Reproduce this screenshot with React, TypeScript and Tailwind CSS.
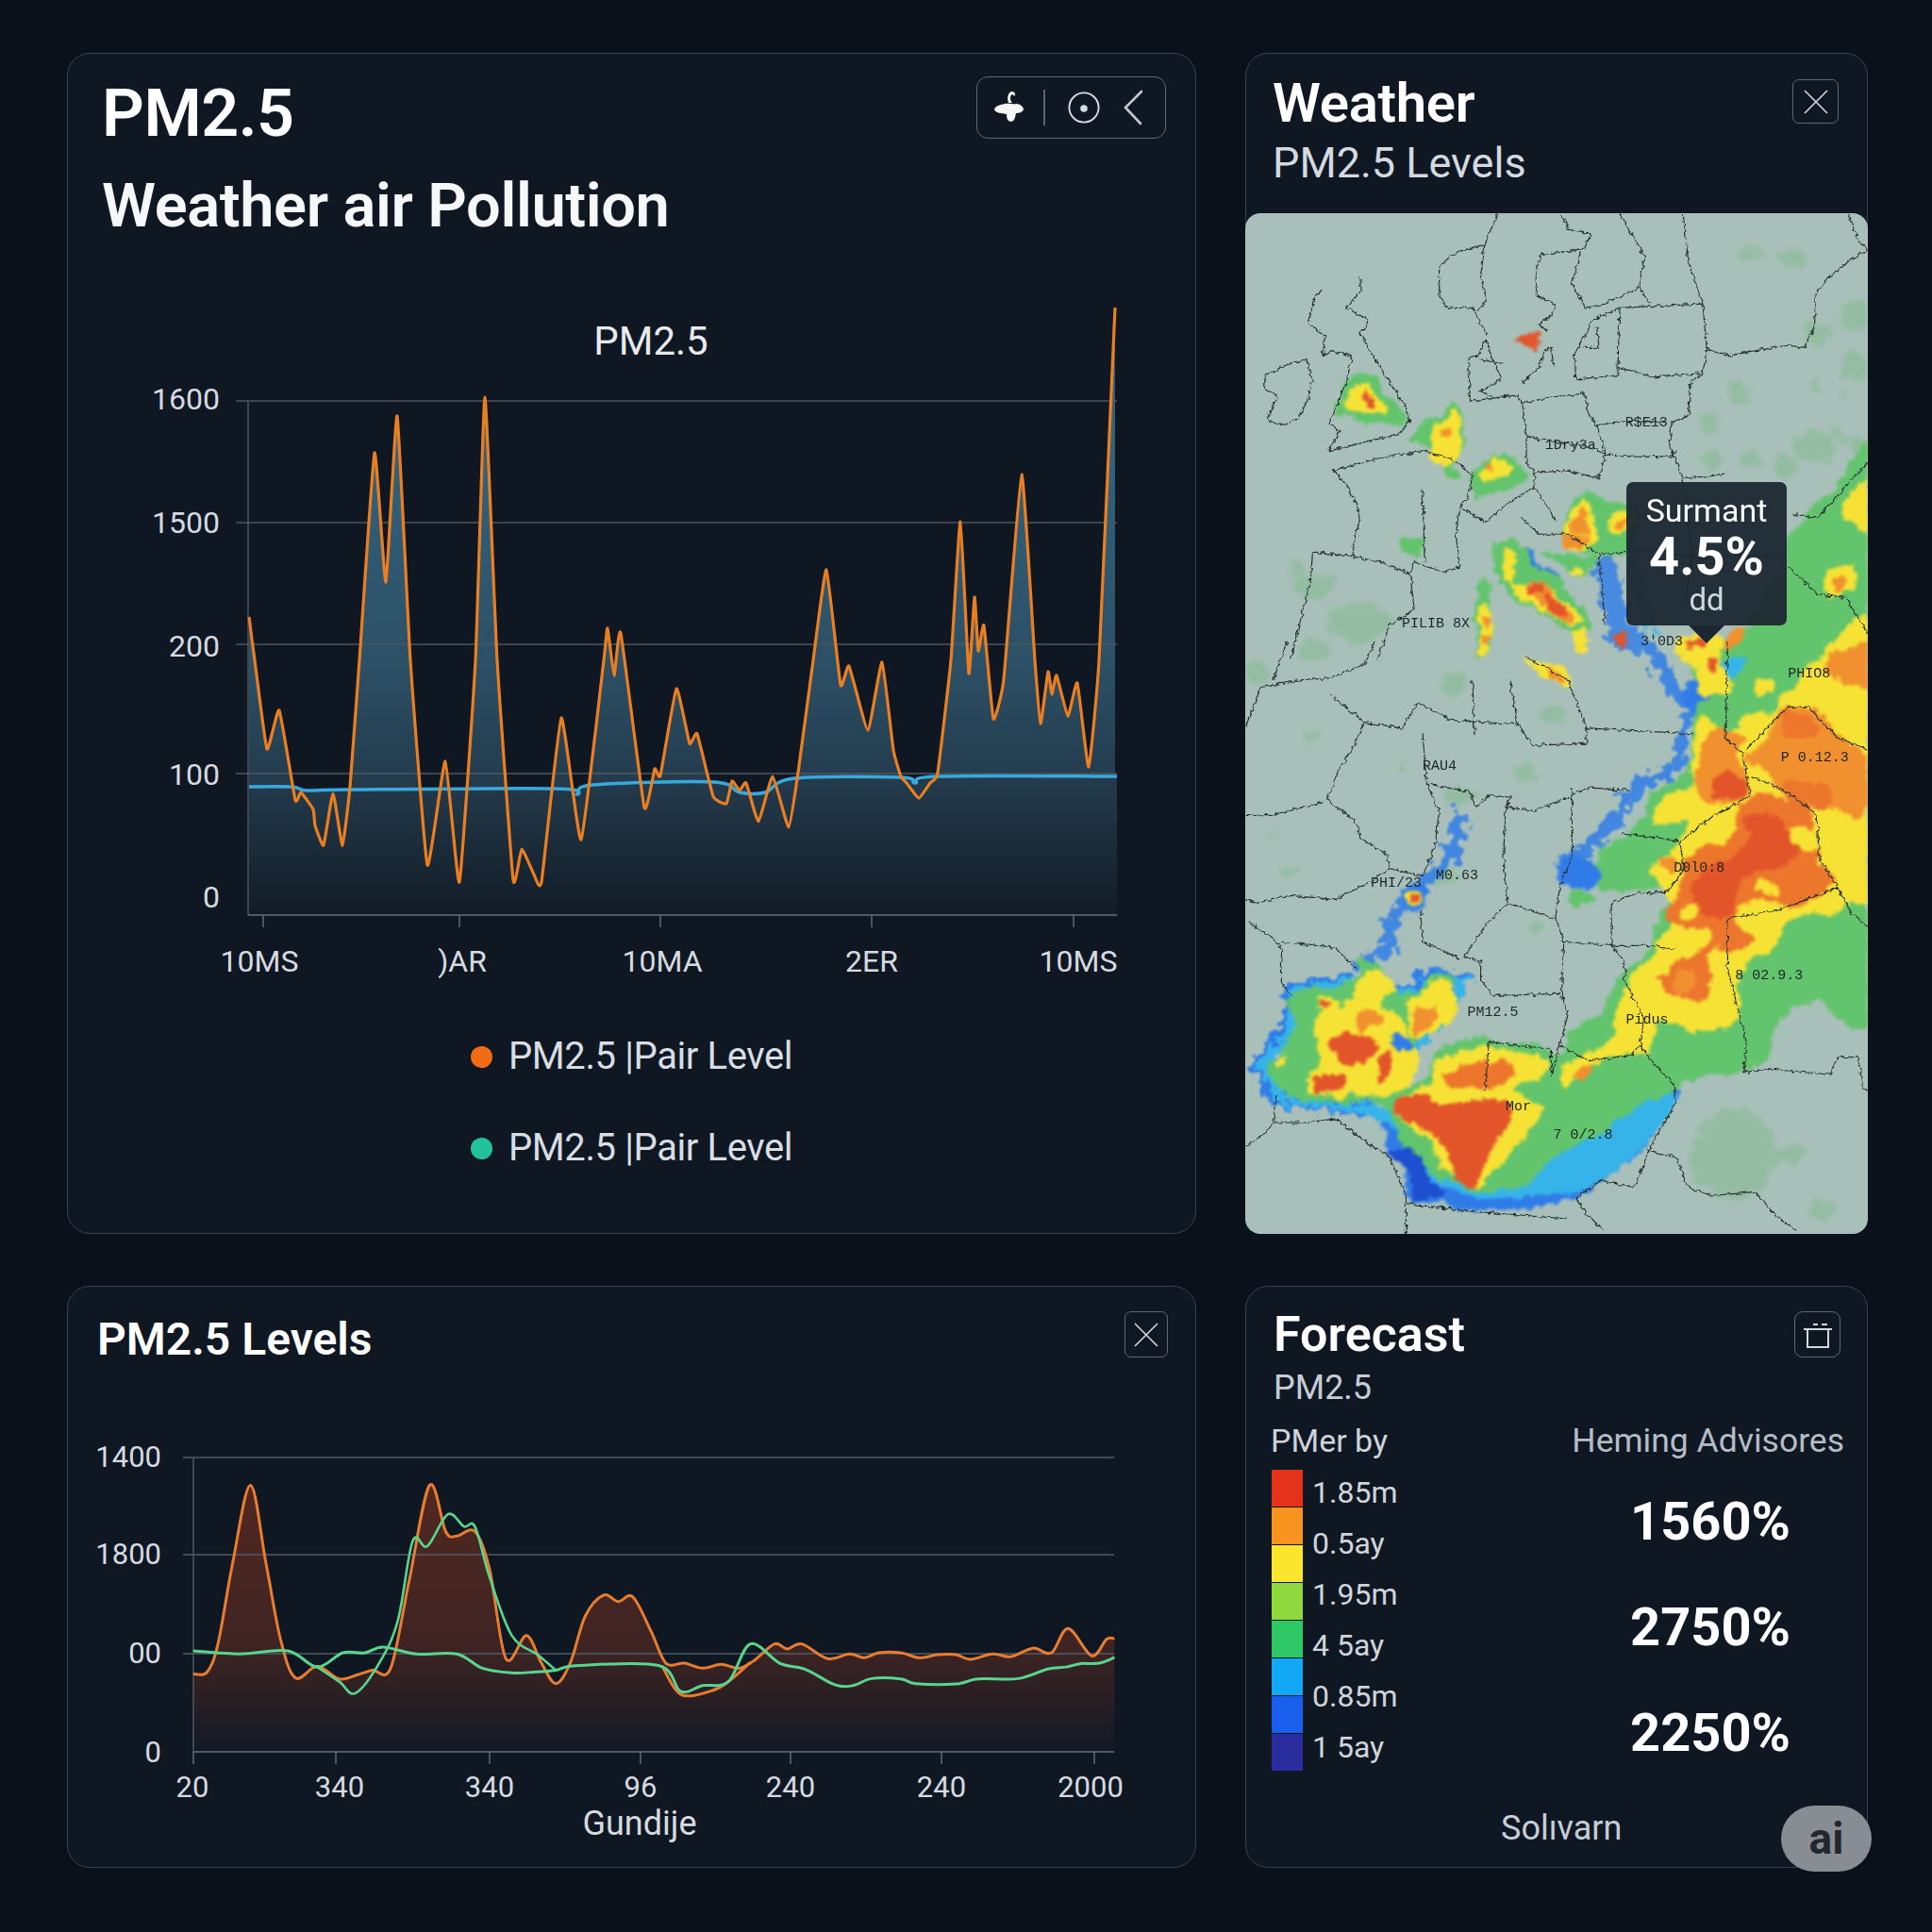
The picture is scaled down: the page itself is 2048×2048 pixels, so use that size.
import React from "react";

type Pt = number[];

const parse = (s: string): Pt[] => s.trim().split(/\s+/).map((p) => p.split(",").map(Number));

// catmull-rom through the points, t keeps the peaks sharp on the big chart
function smooth(p: Pt[], t = 0.5) {
  let d = `M${p[0][0]},${p[0][1]}`;
  for (let i = 0; i < p.length - 1; i++) {
    const a = p[i - 1] || p[i];
    const b = p[i];
    const c = p[i + 1];
    const e = p[i + 2] || c;
    d += ` C${b[0] + ((c[0] - a[0]) * t) / 3},${b[1] + ((c[1] - a[1]) * t) / 3} ${c[0] - ((e[0] - b[0]) * t) / 3},${c[1] - ((e[1] - b[1]) * t) / 3} ${c[0]},${c[1]}`;
  }
  return d;
}

function blob(s: string) {
  const p = parse(s);
  const n = p.length;
  let d = `M${p[0][0]},${p[0][1]}`;
  for (let i = 0; i < n; i++) {
    const a = p[(i - 1 + n) % n];
    const b = p[i];
    const c = p[(i + 1) % n];
    const e = p[(i + 2) % n];
    d += ` C${b[0] + (c[0] - a[0]) / 6},${b[1] + (c[1] - a[1]) / 6} ${c[0] - (e[0] - b[0]) / 6},${c[1] - (e[1] - b[1]) / 6} ${c[0]},${c[1]}`;
  }
  return d + "Z";
}

const mainOrange = parse(
  "264,654 270,700 283,794 296,753 313,848 319,840 332,858 334,875 343,896 353,841 363,896 371,834 381,700 397,480 409,617 421,441 435,700 453,917 472,807 487,935 504,700 514,421 527,700 544,933 553,900 566,927 574,935 595,761 616,890 640,700 644,666 651,716 658,671 683,856 694,815 700,822 717,730 731,788 739,778 756,844 770,852 776,828 784,838 791,830 804,871 819,823 836,877 846,819 862,700 876,604 891,726 900,706 920,774 935,702 947,795 955,823 961,830 974,846 986,830 994,819 1008,700 1018,553 1027,714 1033,633 1037,690 1043,663 1053,762 1064,720 1083,503 1097,700 1103,767 1111,712 1115,736 1120,716 1132,759 1142,724 1154,813 1165,700 1182,326"
);
const mainBlue = parse(
  "264,834 309,834 325,838 367,837 589,836 612,842 628,832 756,829 784,840 811,840 842,825 955,824 970,830 994,823 1184,823"
);

const z6 = (s: string) => parse(s).map(([x, y]) => [60 + x / 1.285, 1350 + y / 2.45]);
const lowOrange = z6(
  "186,1040 205,1035 220,960 240,750 264,550 285,750 305,950 325,1050 355,1020 385,1053 410,1042 430,1030 455,1025 480,800 508,550 530,670 545,682 570,670 590,770 612,1000 640,940 660,1010 680,1065 700,1010 720,890 745,835 765,852 785,840 810,930 830,1012 855,1012 880,1025 905,1015 930,1025 950,1005 978,962 995,975 1015,962 1050,1000 1080,988 1100,998 1120,985 1150,985 1175,998 1200,990 1225,990 1245,1002 1275,988 1300,995 1330,973 1355,985 1378,922 1410,993 1430,950 1441,948"
);
const lowOrangeDip = z6("825,1020 850,1093 890,1085 915,1060 945,1010");
const lowGreen = z6(
  "186,980 250,988 315,980 355,1022 390,985 420,985 445,970 490,988 545,988 580,1025 620,1037 650,1035 680,1030 710,1018 820,1018 850,1085 880,1070 915,1060 945,962 985,1012 1020,1028 1060,1068 1085,1070 1110,1052 1150,1053 1170,1065 1225,1066 1255,1053 1310,1052 1350,1027 1375,1022 1395,1013 1420,1012 1441,997"
);
const lowGreenPeak = z6(
  "355,1022 385,1060 407,1090 440,1010 465,900 485,695 505,708 533,625 555,657 570,658 590,790 620,940 655,990 680,1030"
);

const axisText = "#d5dbe0";

function MainChart() {
  const area = (p: Pt[]) => `${smooth(p, 0.2)} L${p[p.length - 1][0]},970 L${p[0][0]},970Z`;
  return (
    <svg width="1195" height="640" viewBox="72 400 1195 640" className="block shrink-0 overflow-visible">
      <defs>
        <linearGradient id="mainFill" gradientUnits="userSpaceOnUse" x1="0" y1="480" x2="0" y2="972">
          <stop offset="0" stopColor="#33617c" />
          <stop offset="0.45" stopColor="#2c5066" />
          <stop offset="0.7" stopColor="#243c4e" />
          <stop offset="0.88" stopColor="#192835" />
          <stop offset="1" stopColor="#121b27" />
        </linearGradient>
      </defs>
      <path d={area(mainOrange)} fill="url(#mainFill)" />
      <path d={area(mainBlue)} fill="url(#mainFill)" />
      {[425, 554, 683, 820].map((y) => (
        <line key={y} x1="250" x2="1184" y1={y} y2={y} stroke="#4d5761" strokeWidth="1.4" />
      ))}
      <line x1="263" x2="263" y1="425" y2="970" stroke="#4f5a65" strokeWidth="1.4" />
      <line x1="263" x2="1184" y1="970" y2="970" stroke="#66707b" strokeWidth="1.6" />
      {[279, 487, 700, 924, 1138].map((x) => (
        <line key={x} x1={x} x2={x} y1="970" y2="983" stroke="#66707b" strokeWidth="1.4" />
      ))}
      <path d={smooth(mainBlue)} fill="none" stroke="#38a9dc" strokeWidth="3.5" strokeLinejoin="round" />
      <path d={smooth(mainOrange, 0.2)} fill="none" stroke="#ea7f22" strokeWidth="3.2" strokeLinejoin="round" />
      <g fontFamily="Roboto, sans-serif" fontSize="32" fill={axisText}>
        {[
          ["1600", 434],
          ["1500", 565],
          ["200", 696],
          ["100", 832],
          ["0", 962],
        ].map(([t, y]) => (
          <text key={t} x="233" y={y} textAnchor="end">
            {t}
          </text>
        ))}
        {[
          ["10MS", 275],
          [")AR", 490],
          ["10MA", 702],
          ["2ER", 924],
          ["10MS", 1143],
        ].map(([t, x], i) => (
          <text key={i} x={x} y="1030" textAnchor="middle">
            {t}
          </text>
        ))}
      </g>
    </svg>
  );
}

function LowChart() {
  const area = `${smooth(lowOrange)} L1181,1857 L205,1857Z`;
  return (
    <svg width="1195" height="440" viewBox="72 1520 1195 440" className="block shrink-0">
      <defs>
        <linearGradient id="lowFill" gradientUnits="userSpaceOnUse" x1="0" y1="1570" x2="0" y2="1857">
          <stop offset="0" stopColor="#532821" />
          <stop offset="0.6" stopColor="#3f2423" />
          <stop offset="0.8" stopColor="#2a1f24" />
          <stop offset="1" stopColor="#111925" />
        </linearGradient>
      </defs>
      <path d={area} fill="url(#lowFill)" />
      {[1545, 1648, 1753].map((y) => (
        <line key={y} x1="194" x2="1181" y1={y} y2={y} stroke="#525c66" strokeWidth="1.4" />
      ))}
      <line x1="205" x2="205" y1="1545" y2="1857" stroke="#525c66" strokeWidth="1.4" />
      <line x1="205" x2="1181" y1="1857" y2="1857" stroke="#66707b" strokeWidth="1.6" />
      {[205, 356, 519, 679, 838, 998, 1160].map((x) => (
        <line key={x} x1={x} x2={x} y1="1857" y2="1870" stroke="#66707b" strokeWidth="1.4" />
      ))}
      <path d={smooth(lowOrangeDip)} fill="none" stroke="#e87c30" strokeWidth="3" />
      <path d={smooth(lowOrange)} fill="none" stroke="#e87c30" strokeWidth="3" strokeLinejoin="round" />
      <path d={smooth(lowGreen)} fill="none" stroke="#58d68d" strokeWidth="3" strokeLinejoin="round" />
      <path d={smooth(lowGreenPeak)} fill="none" stroke="#58d68d" strokeWidth="2.6" strokeLinejoin="round" />
      <g fontFamily="Roboto, sans-serif" fontSize="31" fill={axisText}>
        {[
          ["1400", 1555],
          ["1800", 1658],
          ["00", 1763],
          ["0", 1868],
        ].map(([t, y]) => (
          <text key={t} x="171" y={y} textAnchor="end">
            {t}
          </text>
        ))}
        {[
          ["20", 204],
          ["340", 360],
          ["340", 519],
          ["96", 679],
          ["240", 838],
          ["240", 998],
          ["2000", 1156],
        ].map(([t, x], i) => (
          <text key={i} x={x} y="1905" textAnchor="middle">
            {t}
          </text>
        ))}
        <text x="678" y="1945" textAnchor="middle" fontSize="36">
          Gundije
        </text>
      </g>
    </svg>
  );
}

const GREEN = "#62c46c";
const YEL = "#f6e234";
const ORG = "#f1902e";
const DEEP = "#ec772c";
const RED = "#e2552a";
const BLUE = "#2f7ce8";
const CYAN = "#36b4ea";
const PALE = "#93bca2";

const heat5: [string, string][] = [
  [BLUE, "340,1250 380,1310 420,1440 540,1478 720,1480 830,1445 900,1385 1000,1300 1060,1200 1040,1170 800,1200 600,1250 400,1200"],
  [CYAN, "330,1215 420,1310 520,1430 690,1445 830,1430 1000,1295 1055,1180 900,1200 760,1300"],
  ["#1d4fd0", "375,1320 430,1320 470,1390 500,1445 440,1450 410,1390"],
  [BLUE, "1090,100 1250,50 1330,90 1280,170 1180,210 1100,190"],
  [CYAN, "1180,60 1300,40 1320,100 1260,170 1190,190"],
  [GREEN, "1110,170 1100,260 1080,340 990,420 960,490 880,540 885,630 950,650 1040,640 1030,700 990,790 930,880 880,960 800,1030 780,1070 640,1040 500,1050 460,1120 400,1150 460,1000 540,880 480,870 420,910 380,910 350,840 300,840 280,880 140,910 130,1000 100,1090 70,1100 110,1170 200,1190 330,1200 390,1280 470,1370 560,1425 700,1410 790,1320 940,1230 1050,1170 1100,1140 1210,1130 1280,1080 1310,980 1400,940 1540,950 1540,-50 1300,-50 1200,100"],
  [YEL, "1120,200 1180,230 1230,190 1300,170 1400,40 1540,-20 1540,620 1460,690 1350,720 1300,780 1230,830 1210,960 1190,1000 1090,1010 1020,990 1000,1060 900,1080 860,1100 790,1160 780,1110 880,1040 910,980 950,880 1020,780 1060,700 1010,620 1000,580 1050,540 1090,470 1010,470 1030,410 1090,380 1100,300"],
  [GREEN, "1190,110 1260,90 1300,120 1240,180 1190,200"],
  [ORG, "1300,190 1380,170 1450,240 1510,290 1530,400 1500,470 1440,430 1350,410 1280,340 1230,310 1270,260"],
  [DEEP, "1320,190 1375,185 1400,230 1360,255 1325,240"],
  [DEEP, "1320,360 1400,370 1440,400 1400,425 1340,400"],
  [ORG, "1420,60 1480,10 1540,10 1540,120 1460,110"],
  [ORG, "1120,290 1150,230 1230,240 1210,280 1230,340 1220,390 1130,420 1100,380 1110,320"],
  [DEEP, "1220,400 1300,390 1390,440 1400,560 1440,630 1360,680 1240,680 1190,720 1250,770 1200,800 1150,800 1130,930 1090,930 1020,880 1050,830 1110,820 1150,760 1080,750 1040,700 1060,640 1090,570 1150,530 1200,500 1210,450"],
  [RED, "1240,460 1320,470 1360,540 1320,590 1230,610 1215,670 1160,720 1110,690 1110,620 1180,560 1230,530"],
  [RED, "1150,360 1200,340 1220,380 1160,400"],
  [YEL, "1350,490 1395,500 1390,540 1350,530"],
  [YEL, "1250,635 1300,630 1300,660 1250,665"],
  [YEL, "1075,690 1110,680 1110,720 1080,725"],
  [ORG, "1015,565 1050,560 1065,600 1035,605"],
  [ORG, "1040,870 1080,850 1100,880 1070,910"],
  [YEL, "290,880 340,850 370,890 350,950 420,1010 430,1100 390,1170 210,1180 170,1160 200,1060 200,980 260,950"],
  [GREEN, "115,1040 150,1020 130,1090 90,1150 105,1100"],
  [YEL, "95,1100 130,1070 115,1110"],
  [RED, "230,1040 300,1010 340,1040 330,1080 270,1100 230,1070"],
  [ORG, "300,960 340,960 350,1000 300,1000"],
  [YEL, "205,915 240,915 245,960 210,965"],
  [RED, "210,930 232,930 232,952 212,952"],
  [YEL, "425,920 520,880 530,940 470,1020 430,1020"],
  [ORG, "435,960 490,940 470,990 440,1020"],
  [RED, "190,1140 260,1130 262,1165 200,1175"],
  [RED, "350,1080 380,1065 360,1135 345,1130"],
  [BLUE, "375,1025 425,1030 425,1060 385,1060"],
  [YEL, "480,1090 560,1060 680,1070 750,1110 680,1170 740,1210 690,1300 630,1380 560,1410 480,1340 440,1270 370,1220 400,1180 470,1150"],
  [DEEP, "500,1120 560,1095 670,1100 650,1150 560,1160 520,1150"],
  [RED, "370,1220 410,1180 520,1195 650,1200 660,1260 620,1310 590,1390 540,1410 500,1320 450,1260"],
  [ORG, "800,1130 850,1100 860,1120 820,1150"],
  [GREEN, "800,660 830,640 870,660 840,690 805,690"],
  [YEL, "1120,50 1170,40 1190,110 1150,140 1115,110"],
  [RED, "1140,45 1165,45 1165,70 1145,70"],
  [YEL, "1260,110 1295,110 1295,140 1262,140"],
  [BLUE, "410,650 450,640 450,690 410,700"],
  [YEL, "420,665 442,660 440,688 420,690"],
  [RED, "425,672 437,672 436,686 425,686"],
  [YEL, "695,45 800,60 805,110 750,90"],
  [ORG, "760,60 790,70 790,100 765,90"],
  [BLUE, "775,575 820,565 880,600 870,630 810,635 780,620"],
];

const heat4: [string, string][] = [
  [GREEN, "280,850 340,850 370,900 410,960 350,975 250,960 250,910"],
  [YEL, "295,880 340,880 360,930 320,950 280,950 262,920"],
  [RED, "315,890 335,910 335,930 312,930"],
  [GREEN, "430,1020 480,950 535,925 545,1000 530,1060 550,1090 520,1095 480,1040"],
  [YEL, "480,970 530,945 535,1000 525,1060 470,1060 470,1020"],
  [ORG, "490,980 510,980 510,1000 490,1000"],
  [GREEN, "570,1100 610,1050 670,1060 700,1110 680,1140 600,1150 570,1170"],
  [YEL, "585,1090 620,1060 670,1085 650,1110 590,1110"],
  [ORG, "593,1068 612,1068 612,1085 595,1085"],
  [GREEN, "790,1200 840,1140 900,1170 950,1190 950,1290 860,1300 800,1280"],
  [YEL, "800,1200 850,1170 860,1270 800,1290"],
  [ORG, "815,1210 850,1200 845,1240 820,1240"],
  [ORG, "795,1250 835,1250 835,1285 800,1285"],
  [YEL, "905,1205 945,1205 945,1245 905,1245"],
  [ORG, "918,1215 935,1215 935,1235 918,1235"],
  [GREEN, "750,1290 830,1310 870,1300 850,1350 810,1350"],
  [YEL, "805,1335 835,1335 835,1355 805,1355"],
  [BLUE, "690,1290 710,1290 770,1350 740,1360"],
  [GREEN, "615,1290 660,1265 700,1300 780,1370 840,1450 860,1490 830,1510 780,1480 700,1430 650,1370"],
  [YEL, "640,1300 665,1300 690,1370 770,1400 830,1470 790,1470 700,1420"],
  [ORG, "700,1385 740,1370 770,1410 810,1460 770,1460 730,1430"],
  [RED, "705,1385 740,1378 745,1400 712,1405"],
  [RED, "745,1415 790,1430 790,1455 760,1450"],
  [YEL, "815,1500 840,1500 845,1550 820,1550"],
  [GREEN, "585,1375 610,1370 612,1450 615,1530 585,1540 580,1450"],
  [YEL, "590,1430 610,1430 612,1530 588,1535"],
  [ORG, "595,1455 608,1455 608,1475 595,1475"],
  [ORG, "595,1500 610,1500 610,1525 595,1525"],
  [GREEN, "400,1265 445,1265 445,1295 400,1295"],
  [GREEN, "1530,1070 1440,1130 1370,1200 1330,1300 1230,1480 1100,1600 1540,1700"],
  [YEL, "1540,1110 1480,1150 1470,1210 1520,1240 1540,1230"],
  [YEL, "1420,1330 1490,1330 1490,1400 1420,1410"],
  [ORG, "1440,1350 1470,1350 1470,1380 1440,1385"],
  [YEL, "1395,1500 1480,1490 1500,1560 1400,1568"],
  [ORG, "1420,1500 1460,1500 1460,1530 1425,1530"],
  [YEL, "1070,1510 1160,1510 1160,1580 1075,1580"],
  [RED, "1090,1520 1130,1520 1130,1545 1095,1545"],
  [ORG, "1180,1490 1215,1485 1210,1530 1175,1535"],
  [RED, "920,1500 945,1500 945,1530 922,1530"],
  [RED, "692,748 722,745 722,772 695,775"],
];

// blue speckled rims, drawn under the heat shapes
const rims5 = [
  "M990,0 L1020,60 L1060,130 L1100,170 L1080,250 L1060,330 L960,380 L920,460 L850,530 L790,590",
  "M545,440 L530,500 L520,560 L470,610 L430,650 L380,710 L370,790 L300,850",
];
const edge5 = [
  "M280,880 L140,910 L130,1000 L60,1100 L100,1185 L200,1195 L330,1215",
  "M380,910 L420,910 L480,870 L540,880 L460,1000 L430,1050",
];

const pale4: [number, number, number, number][] = [
  [1240, 545, 40, 18], [1335, 560, 30, 25], [1490, 700, 35, 40], [1400, 745, 30, 30], [1490, 830, 30, 40],
  [1215, 895, 30, 30], [1400, 880, 15, 12], [1465, 900, 8, 12], [1140, 970, 25, 25], [1455, 995, 15, 15],
  [1150, 1065, 25, 25], [1400, 1030, 50, 40], [1320, 1080, 25, 30], [1490, 1020, 25, 20], [1240, 1060, 30, 20],
  [190, 1380, 55, 30], [300, 1470, 80, 50], [150, 1340, 15, 25],
];
const pale5: [number, number, number, number][] = [
  [190, 25, 40, 25], [50, 80, 30, 30], [185, 245, 20, 15], [400, 320, 10, 15], [530, 400, 30, 25], [520, 110, 30, 30],
  [760, 190, 30, 25], [700, 340, 30, 25], [720, 745, 15, 15], [130, 595, 20, 15], [90, 500, 12, 10], [500, 610, 30, 20],
  [1200, 1330, 100, 120], [1140, 1360, 50, 60], [1340, 1330, 40, 25], [1410, 1480, 30, 25], [560, 400, 20, 15],
];

const lines4 = [
  "M630,445 L600,520 L530,540 L490,575 L490,650 L510,680 L570,680 L605,750",
  "M600,520 L590,600 L605,660 L585,685",
  "M785,445 L800,480 L855,495 L840,530 L790,540 L735,545 L720,600 L725,650 L770,670 L760,700 L730,720 L750,740",
  "M925,445 L985,550 L970,630 L890,670 L840,680 L810,620 L830,540",
  "M1078,445 L1090,560 L1125,670 L1135,785 L1125,845 L1095,870 L1090,950 L1050,970 L1045,1030 L1060,1060 L1075,1110 L1180,1100",
  "M925,680 L1125,670 M925,680 L920,850 M970,630 L1000,670 M820,860 L920,850 M920,830 L1010,855 L1120,845",
  "M860,710 L925,680 M820,860 L815,800 L860,710 M870,730 L875,780 L840,780",
  "M1135,785 L1190,800 L1240,790 L1330,775 L1370,780 L1395,720 L1395,650 L1430,600 L1480,560 L1522,535",
  "M1475,445 L1500,510 L1522,535",
  "M600,760 L585,800 L560,805 L565,915 M600,760 L640,860 L590,890 L620,905 M590,810 L640,820 M690,870 L730,830 L745,790 L760,780 L765,825",
  "M300,605 L300,640 L265,680 L320,710 L300,745 L330,800 L360,850 L410,930 L420,965 L390,1000 L320,1015 L225,1040 L250,990 L225,970 L250,910 L270,850 L280,800 L230,790 L210,800 L215,750 L175,720 L190,650 L210,635",
  "M70,850 L130,820 L170,810 L185,860 L170,920 L150,960 L110,975 L75,960 L100,900 L70,885 Z",
  "M565,915 L680,900 L690,920 L760,905 L840,895 L850,950 L870,975 L950,965 L1040,970",
  "M690,920 L700,1000 L700,1070 L720,1095 L800,1090 L875,1110 L890,1045 L870,975",
  "M700,1005 L870,1035 L890,1050 L1050,1055 L1060,1040",
  "M235,1090 L340,1060 L450,1040 L520,1060 L570,1100 L560,1160 L540,1180 L530,1250 L540,1330 L500,1345 L430,1320 L420,1350 L350,1320 L280,1305 L300,1200 L270,1130 Z",
  "M450,1135 L455,1320 M540,1180 L600,1220 L660,1170 L720,1130 L720,1095 M720,1130 L770,1215 M690,1210 L730,1250 L800,1250 L875,1300 L890,1480",
  "M185,1295 L280,1305 M185,1295 L180,1370 L130,1568 M340,1568 L370,1480 L430,1440 L420,1350",
  "M1340,1200 L1400,1210 L1470,1130 L1522,1070 M1330,1330 L1400,1400 L1470,1410 L1522,1500",
  "M1075,1110 L1100,1300 L1080,1450",
  "M880,1300 L1010,1290 L1120,1310 L1325,1300",
];

const lines5 = [
  "M90,100 L125,0",
  "M24,220 L60,120 L150,100 L230,95 L310,60 L335,0",
  "M230,140 L310,210 L400,225 L440,160 L520,205 L680,215 L715,270 L845,265 L845,225 L1100,240",
  "M310,210 L280,280 L250,330 L220,410 L290,470 L300,510 L365,555 L370,590 L450,610",
  "M24,450 L90,450 L215,415",
  "M450,240 L460,370 L490,440 L480,530 L450,610",
  "M460,370 L560,390 L580,430 L610,400 L665,405 L650,430 L720,440 L800,405 L850,380 L950,385",
  "M650,430 L645,560 L655,680 L600,740 L550,820 L590,830 L590,880 L620,920 L780,915",
  "M24,670 L50,680 L130,660 L240,670 L330,620 L370,590",
  "M30,730 L90,770 L110,800 L110,890 L135,920",
  "M110,780 L240,795 L290,850",
  "M445,700 L450,780 L540,825",
  "M655,680 L770,720 L790,780 L905,790 L990,790 L1060,800",
  "M770,720 L780,640 L810,560 L810,380",
  "M790,780 L785,920 L800,970 L780,1050 L760,1130",
  "M905,680 L905,790 L930,820 L940,860 L935,880 L985,980 L975,1050 L1010,1100 L1055,1150 L1060,1200 L1000,1310 L960,1420 L880,1400 L820,1445 L840,1480 L885,1530",
  "M905,680 L960,655 L1040,650 L1080,590 L1070,520 L1140,460 L1240,400 L1220,290 L1180,250 L1185,0",
  "M1070,520 L1020,510 L930,500",
  "M1240,350 L1290,370 L1340,400 L1400,450 L1405,560 L1450,640 L1480,700 L1522,740",
  "M1185,720 L1300,700 L1450,640",
  "M1185,720 L1185,850 L1230,1040 L1225,1120",
  "M1225,1120 L1280,1110 L1430,1125 L1450,1080 L1500,1080 L1510,1160 L1522,1165",
  "M1230,280 L1330,170 L1380,170 L1450,250 L1522,280",
  "M24,1310 L70,1280 L90,1250 L170,1250 L240,1240 L300,1290 L370,1340 L410,1440 L410,1540",
  "M410,1460 L560,1480 L800,1500 M90,1250 L100,1180",
  "M760,1130 L760,1060 L610,1040 L600,1170 M780,1050 L850,1090 L950,1075 L975,1050",
  "M990,1320 L1060,1340 L1090,1420 L1150,1440 L1250,1430 L1310,1500 L1350,1530",
  "M570,100 L575,240 M660,100 L680,215 M700,40 L800,100 L845,225",
];

const labels5: [string, number, number][] = [
  ["PM12.5", 558, 972],
  ["8 02.9.3", 1203, 878],
  ["7 0/2.8", 765, 1292],
  ["P 0.12.3", 1313, 312],
  ["Pidus", 940, 992],
  ["D0l0:8", 1055, 597],
  ["PHI/23", 325, 638],
  ["M0.63", 482, 617],
  ["RAU4", 450, 333],
  ["PHIO8", 1330, 92],
  ["Mor", 650, 1218],
];
const labels4: [string, number, number][] = [
  ["R$E13", 938, 978],
  ["1Dry3a", 745, 1036],
  ["PILIB 8X", 400, 1484],
  ["3'0D3", 975, 1530],
];

function MapPanel() {
  return (
    <svg viewBox="0 0 660 1082" preserveAspectRatio="none" className="block w-full h-full">
      <defs>
        <filter id="rough" filterUnits="userSpaceOnUse" x="0" y="0" width="660" height="1082" colorInterpolationFilters="sRGB">
          <feTurbulence type="fractalNoise" baseFrequency="0.03" numOctaves="3" seed="7" result="n1" />
          <feDisplacementMap in="SourceGraphic" in2="n1" scale="22" xChannelSelector="R" yChannelSelector="G" result="d1" />
          <feTurbulence type="fractalNoise" baseFrequency="0.18" numOctaves="2" seed="4" result="n2" />
          <feDisplacementMap in="d1" in2="n2" scale="9" xChannelSelector="R" yChannelSelector="G" />
          <feGaussianBlur stdDeviation="1.5" />
        </filter>
        <filter id="speckle" filterUnits="userSpaceOnUse" x="0" y="0" width="660" height="1082" colorInterpolationFilters="sRGB">
          <feTurbulence type="fractalNoise" baseFrequency="0.09" numOctaves="3" seed="9" result="n1" />
          <feDisplacementMap in="SourceGraphic" in2="n1" scale="26" xChannelSelector="R" yChannelSelector="G" />
          <feGaussianBlur stdDeviation="1" />
        </filter>
        <filter id="soft" filterUnits="userSpaceOnUse" x="0" y="0" width="660" height="1082" colorInterpolationFilters="sRGB">
          <feTurbulence type="fractalNoise" baseFrequency="0.08" numOctaves="3" seed="3" result="n1" />
          <feDisplacementMap in="SourceGraphic" in2="n1" scale="20" xChannelSelector="R" yChannelSelector="G" />
          <feGaussianBlur stdDeviation="2" />
        </filter>
        <filter id="jag" filterUnits="userSpaceOnUse" x="0" y="0" width="660" height="1082" colorInterpolationFilters="sRGB">
          <feTurbulence type="fractalNoise" baseFrequency="0.2" numOctaves="2" seed="11" result="n1" />
          <feDisplacementMap in="SourceGraphic" in2="n1" scale="6" xChannelSelector="R" yChannelSelector="G" />
        </filter>
      </defs>
      <rect width="660" height="1082" fill="#a9c0ba" />
      <g filter="url(#soft)" fill={PALE}>
        <g transform="translate(-10 -186) scale(.44 .421)">
          {pale4.map(([x, y, a, b], i) => (
            <ellipse key={i} cx={x} cy={y} rx={a} ry={b} />
          ))}
        </g>
        <g transform="translate(-10 454) scale(.44 .408)">
          {pale5.map(([x, y, a, b], i) => (
            <ellipse key={i} cx={x} cy={y} rx={a} ry={b} />
          ))}
        </g>
      </g>
      <g filter="url(#speckle)" fill="none" stroke={BLUE}>
        <g transform="translate(-10 -186) scale(.44 .421)">
          <path d="M880,1310 L905,1400 L920,1500 L980,1530" strokeWidth="56" opacity="0.8" />
          <path d="M950,1300 L1000,1500" strokeWidth="26" stroke={CYAN} opacity="0.6" />
        </g>
        <g transform="translate(-10 454) scale(.44 .408)">
          {rims5.map((d) => (
            <path key={d} d={d} strokeWidth="36" opacity="0.85" />
          ))}
          {edge5.map((d) => (
            <path key={d} d={d} strokeWidth="46" />
          ))}
          {edge5.map((d) => (
            <path key={d} d={d} stroke={CYAN} strokeWidth="28" transform="translate(8 4)" />
          ))}
        </g>
      </g>
      <g filter="url(#rough)">
        <g transform="translate(-10 -186) scale(.44 .421)">
          {heat4.map(([c, s], i) => (
            <path key={i} d={blob(s)} fill={c} />
          ))}
        </g>
        <g transform="translate(-10 454) scale(.44 .408)">
          {heat5.map(([c, s], i) => (
            <path key={i} d={blob(s)} fill={c} />
          ))}
        </g>
      </g>
      <g filter="url(#jag)" fill="none" stroke="#27312f" strokeWidth="1.2" strokeLinejoin="round">
        <g transform="translate(-10 -186) scale(.44 .421)">
          {lines4.map((d, i) => (
            <path key={i} d={d} vectorEffect="non-scaling-stroke" />
          ))}
        </g>
        <g transform="translate(-10 454) scale(.44 .408)">
          {lines5.map((d, i) => (
            <path key={i} d={d} vectorEffect="non-scaling-stroke" />
          ))}
        </g>
      </g>
      <g fontFamily="'Liberation Mono', monospace" fontSize="15" fill="#1c2626">
        {labels4.map(([t, x, y]) => (
          <text key={t} x={x * 0.44 - 10} y={y * 0.421 - 186}>
            {t}
          </text>
        ))}
        {labels5.map(([t, x, y]) => (
          <text key={t} x={x * 0.44 - 10} y={y * 0.408 + 454}>
            {t}
          </text>
        ))}
      </g>
    </svg>
  );
}

function CloseBtn({ className = "" }: { className?: string }) {
  return (
    <div className={`flex items-center justify-center border border-[#5d6873] rounded-[7px] ${className}`}>
      <svg width="28" height="28" viewBox="0 0 28 28" fill="none" stroke="#d3d9de" strokeWidth="1.6">
        <path d="M2 2 L26 26 M26 2 L2 26" />
      </svg>
    </div>
  );
}

function Card({ className = "", children }: { className?: string; children: React.ReactNode }) {
  return (
    <div className={`relative flex flex-col bg-[#0f1723] border border-[#38424d] rounded-[24px] ${className}`}>
      {children}
    </div>
  );
}

function Legend({ color }: { color: string }) {
  return (
    <div className="flex items-center gap-[17px] h-[50px]">
      <span className={`w-[23px] h-[23px] rounded-full ${color}`} />
      <span className="text-[40px] tracking-[-0.4px] text-[#d8dee3]">PM2.5 |Pair Level</span>
    </div>
  );
}

const swatches = [
  "bg-[#e4331a]",
  "bg-[#f7931e]",
  "bg-[#fbe62d]",
  "bg-[#8fd93f]",
  "bg-[#2ec866]",
  "bg-[#12a8f5]",
  "bg-[#1a5eee]",
  "bg-[#2a2d9e]",
];

export default function App() {
  return (
    <div className="w-[2048px] h-[2048px] bg-[#0a111a] pt-[56px] pl-[71px] font-[Roboto,sans-serif] text-white overflow-hidden">
      <div className="grid grid-cols-[1197px_660px] grid-rows-[1252px_617px] gap-x-[52px] gap-y-[55px]">
        <Card>
          <div className="flex justify-between pl-[36px] pr-[31px]">
            <div>
              <h1 className="mt-[28px] h-[70px] text-[70px] leading-[70px] font-semibold tracking-[-0.5px]">PM2.5</h1>
              <h2 className="mt-[28px] text-[65px] leading-[70px] font-semibold tracking-[-0.4px] text-[#f6f7f8]">
                Weather air Pollution
              </h2>
            </div>
            <div className="flex items-center mt-[24px] w-[201px] h-[66px] border border-[#5d6873] rounded-[12px]">
              <svg width="34" height="40" viewBox="0 0 34 40" className="ml-[16px]" fill="#f5f5f2">
                <path d="M13 16 C18 15 22 17 26 16 C31 17 33 20 33 22 C32 25 28 26 25 26 C24 30 24 34 20 35 C16 35 15 31 15 27 C10 26 3 26 2 22 C3 18 9 17 13 16Z" />
                <path d="M17 15 C15 9 17 3 21 3 C24 3 25 7 23 8 C22 5 19 6 19 10 C19 12 20 14 21 15Z" />
              </svg>
              <span className="ml-[20px] w-[2px] h-[38px] bg-[#5b6570]" />
              <svg width="34" height="34" viewBox="0 0 36 36" className="ml-[24px]" fill="none">
                <circle cx="18" cy="18" r="16.5" stroke="#d8dde1" strokeWidth="2" />
                <circle cx="18" cy="19" r="4" fill="#d8dde1" />
              </svg>
              <svg width="22" height="38" viewBox="0 0 22 38" className="ml-[24px]" fill="none" stroke="#bfc6cc" strokeWidth="2.6" strokeLinecap="round">
                <path d="M20 2 L3 19 L19 36" />
              </svg>
            </div>
          </div>
          <p className="mt-[84px] h-[63px] ml-[1px] text-center text-[42px] leading-[50px] text-[#e7ebee] pl-[40px]">
            PM2.5
          </p>
          <MainChart />
          <div className="mt-[55px] ml-[427px] flex flex-col gap-[47px]">
            <Legend color="bg-[#f26a14]" />
            <Legend color="bg-[#20c39e]" />
          </div>
        </Card>

        <Card>
          <div className="flex justify-between h-[169px] pl-[28px] pr-[30px]">
            <div>
              <h2 className="mt-[17px] text-[58px] leading-[70px] font-semibold tracking-[-0.3px]">Weather</h2>
              <p className="mt-[3px] text-[45px] leading-[52px] text-[#d3dae0]">PM2.5 Levels</p>
            </div>
            <CloseBtn className="mt-[27px] w-[49px] h-[47px]" />
          </div>
          <div className="relative flex-1 -mx-px -mb-px rounded-[16px] overflow-hidden">
            <MapPanel />
            <div className="absolute left-[404px] top-[285px] w-[170px] h-[152px] rounded-[7px] bg-[#1b2732]/95 flex flex-col items-center">
              <span className="mt-[10px] text-[34px] leading-[40px]">Surmant</span>
              <span className="text-[56px] leading-[58px] font-bold">4.5%</span>
              <span className="text-[33px] leading-[34px] text-[#cfd8de]">dd</span>
              <span className="absolute left-[66px] -bottom-[19px] w-0 h-0 border-x-[19px] border-t-[19px] border-x-transparent border-t-[#1b2732]" />
            </div>
          </div>
        </Card>

        <Card>
          <div className="flex justify-between h-[156px] pl-[31px] pr-[29px]">
            <h2 className="mt-[27px] text-[48px] leading-[58px] font-semibold">PM2.5 Levels</h2>
            <CloseBtn className="mt-[26px] w-[46px] h-[49px]" />
          </div>
          <LowChart />
        </Card>

        <Card>
          <div className="flex justify-between pl-[29px] pr-[28px]">
            <div>
              <h2 className="mt-[20px] text-[52px] leading-[62px] font-semibold">Forecast</h2>
              <p className="mt-[4px] text-[36px] leading-[42px] text-[#c5ced6]">PM2.5</p>
            </div>
            <div className="mt-[26px] flex items-center justify-center w-[49px] h-[49px] border border-[#5d6873] rounded-[9px]">
              <svg width="30" height="30" viewBox="0 0 30 30" fill="none" stroke="#d3d9de" strokeWidth="2">
                <path d="M0 9 H30 M4 9 V28 H26 V9 M10 4 H15 M19 4 H25" />
              </svg>
            </div>
          </div>
          <div className="flex justify-between pl-[26px] pr-[24px] mt-[15px]">
            <div>
              <p className="text-[34px] leading-[40px] text-[#cdd4da]">PMer by</p>
              <div className="flex mt-[11px] ml-px gap-[10px]">
                <div className="flex flex-col w-[33px] gap-px">
                  {swatches.map((c) => (
                    <span key={c} className={`h-[39px] ${c}`} />
                  ))}
                </div>
                <div className="flex flex-col gap-[14px] pt-[4px] text-[32px] leading-[40px] text-[#cfd6db]">
                  <span>1.85m</span>
                  <span>0.5ay</span>
                  <span>1.95m</span>
                  <span>4 5ay</span>
                  <span>0.85m</span>
                  <span>1 5ay</span>
                </div>
              </div>
            </div>
            <div className="flex flex-col items-end">
              <p className="text-[35.5px] leading-[40px] text-[#b4bdc5]">Heming Advisores</p>
              <div className="flex flex-col gap-[52px] mt-[36px] mr-[57px] items-center text-[56px] leading-[60px] font-bold">
                <span>1560%</span>
                <span>2750%</span>
                <span>2250%</span>
              </div>
            </div>
          </div>
          <p className="mt-[39px] ml-[270px] text-[36px] leading-[44px] text-[#c5ced6]">Solıvarn</p>
          <div className="absolute left-[567px] top-[550px] w-[96px] h-[70px] rounded-full bg-[#888d94] flex items-center justify-center text-[46px] font-bold text-[#23272d]">
            ai
          </div>
        </Card>
      </div>
    </div>
  );
}
